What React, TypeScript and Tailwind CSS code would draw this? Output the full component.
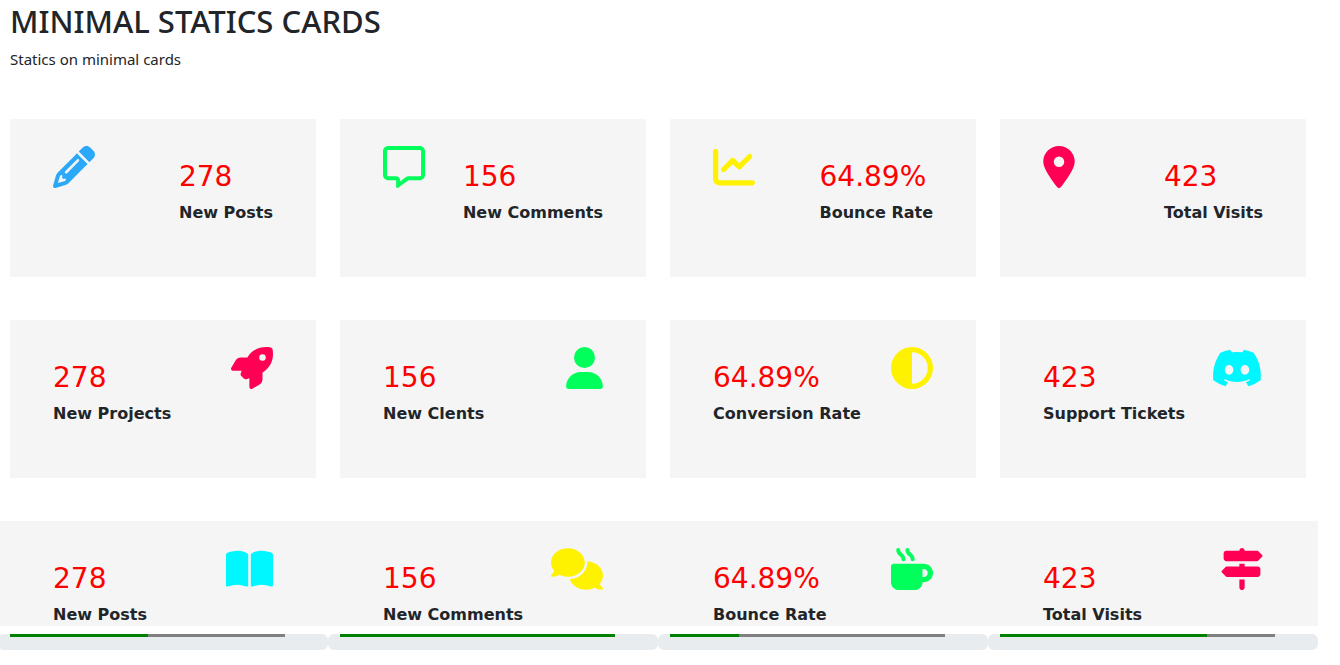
import type { IconType } from "react-icons";
import {
  FaBookOpen,
  FaChartLine,
  FaCircleHalfStroke,
  FaComments,
  FaDiscord,
  FaLocationDot,
  FaMugHot,
  FaPencil,
  FaRegMessage,
  FaRocket,
  FaSignsPost,
  FaUser,
} from "react-icons/fa6";

type Stat = {
  value: string;
  label: string;
  icon: IconType;
  iconStyle: string;
  progress?: number;
};

const overview: Stat[] = [
  { value: "278", label: "New Posts", icon: FaPencil, iconStyle: "w-[42px] text-[#2ca8f9]" },
  { value: "156", label: "New Comments", icon: FaRegMessage, iconStyle: "w-[42px] text-[#00ff5a]" },
  { value: "64.89%", label: "Bounce Rate", icon: FaChartLine, iconStyle: "w-[42px] text-[#fff200]" },
  { value: "423", label: "Total Visits", icon: FaLocationDot, iconStyle: "w-[32px] text-[#ff0055]" },
];

const business: Stat[] = [
  { value: "278", label: "New Projects", icon: FaRocket, iconStyle: "w-[42px] text-[#ff0055]" },
  { value: "156", label: "New Clents", icon: FaUser, iconStyle: "w-[37px] text-[#00ff5a]" },
  { value: "64.89%", label: "Conversion Rate", icon: FaCircleHalfStroke, iconStyle: "w-[42px] text-[#fff200]" },
  { value: "423", label: "Support Tickets", icon: FaDiscord, iconStyle: "w-[52px] text-[#00f7ff]" },
];

const tracked: Stat[] = [
  { value: "278", label: "New Posts", icon: FaBookOpen, iconStyle: "w-[47px] text-[#00f7ff]", progress: 50 },
  { value: "156", label: "New Comments", icon: FaComments, iconStyle: "w-[52px] text-[#fff200]", progress: 100 },
  { value: "64.89%", label: "Bounce Rate", icon: FaMugHot, iconStyle: "w-[42px] text-[#00ff5a]", progress: 25 },
  { value: "423", label: "Total Visits", icon: FaSignsPost, iconStyle: "w-[42px] text-[#ff0055]", progress: 75 },
];

function StatContent({ stat, iconFirst = false }: { stat: Stat; iconFirst?: boolean }) {
  const Icon = stat.icon;
  return (
    <div className={`flex items-start justify-between ${iconFirst ? "flex-row-reverse" : "flex-row"}`}>
      <div className="pt-[37px]">
        <p className="text-[28px] leading-[42px] text-[#ff0000]">{stat.value}</p>
        <h2 className="mt-1 text-base leading-[22px] font-bold">{stat.label}</h2>
      </div>
      <Icon aria-hidden="true" className={`mt-[27px] h-[42px] shrink-0 ${stat.iconStyle}`} />
    </div>
  );
}

function CardRow({ stats, iconFirst = false }: { stats: Stat[]; iconFirst?: boolean }) {
  return (
    <section className="mb-[43px] grid grid-cols-4 gap-6 px-3">
      {stats.map((stat) => (
        <article key={stat.label} className="bg-[#f5f5f5] px-[43px] pb-[53px]">
          <StatContent stat={stat} iconFirst={iconFirst} />
        </article>
      ))}
    </section>
  );
}

function ProgressRow({ stats }: { stats: Stat[] }) {
  return (
    <section className="grid grid-cols-4">
      {stats.map((stat) => (
        <article key={stat.label}>
          <div className="mb-2 bg-[#f5f5f5] px-[55px]">
            <StatContent stat={stat} />
          </div>
          <div className="h-4 rounded-md bg-[#e9ecef] px-3">
            <div
              role="progressbar"
              aria-label={stat.label}
              aria-valuenow={stat.progress}
              className="h-[3px] w-9/10 bg-[#808080]"
            >
              <div className="h-full bg-[#008000]" style={{ width: `${stat.progress}%` }} />
            </div>
          </div>
        </article>
      ))}
    </section>
  );
}

export default function App() {
  return (
    <main className="mr-[22px] overflow-hidden bg-white font-['DejaVu_Sans',sans-serif] text-[#212529]">
      <header className="mb-[50px] px-2.5 font-['Noto_Sans',sans-serif]">
        <h1 className="mb-2 text-[31px] leading-[42px] font-medium">MINIMAL STATICS CARDS</h1>
        <p className="text-[15px] leading-[19px]">Statics on minimal cards</p>
      </header>
      <div className="-ml-0.5">
        <CardRow stats={overview} iconFirst />
        <CardRow stats={business} />
        <ProgressRow stats={tracked} />
      </div>
    </main>
  );
}
